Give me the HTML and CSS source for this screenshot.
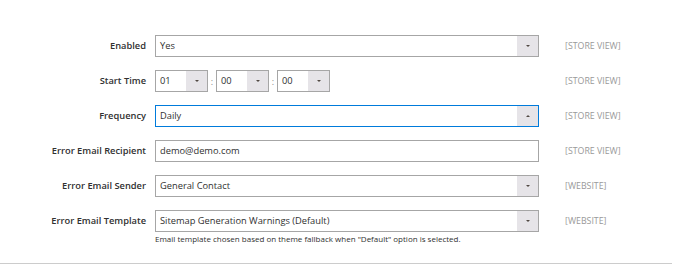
FILE: index.html
```html
<!DOCTYPE html>
<html lang="en">
<head>
    <meta charset="UTF-8">
    <title>Sitemap Generation Settings</title>
    <link rel="stylesheet" href="styles.css">
</head>
<body>
    <div class="config">
        <div class="row">
            <label class="label">Enabled</label>
            <div class="control">
                <div class="select">
                    <span class="value">Yes</span>
                    <span class="action"><span class="arrow"></span></span>
                </div>
            </div>
            <span class="scope">[STORE VIEW]</span>
        </div>

        <div class="row">
            <label class="label">Start Time</label>
            <div class="control time">
                <div class="select small">
                    <span class="value">01</span>
                    <span class="action"><span class="arrow"></span></span>
                </div>
                <span class="colon">:</span>
                <div class="select small">
                    <span class="value">00</span>
                    <span class="action"><span class="arrow"></span></span>
                </div>
                <span class="colon">:</span>
                <div class="select small">
                    <span class="value">00</span>
                    <span class="action"><span class="arrow"></span></span>
                </div>
            </div>
            <span class="scope">[STORE VIEW]</span>
        </div>

        <div class="row">
            <label class="label">Frequency</label>
            <div class="control">
                <div class="select focus">
                    <span class="value">Daily</span>
                    <span class="action"><span class="arrow up"></span></span>
                </div>
            </div>
            <span class="scope">[STORE VIEW]</span>
        </div>

        <div class="row">
            <label class="label">Error Email Recipient</label>
            <div class="control">
                <div class="select">
                    <span class="value">demo@demo.com</span>
                </div>
            </div>
            <span class="scope">[STORE VIEW]</span>
        </div>

        <div class="row">
            <label class="label">Error Email Sender</label>
            <div class="control">
                <div class="select">
                    <span class="value">General Contact</span>
                    <span class="action"><span class="arrow"></span></span>
                </div>
            </div>
            <span class="scope">[WEBSITE]</span>
        </div>

        <div class="row">
            <label class="label">Error Email Template</label>
            <div class="control">
                <div class="select">
                    <span class="value">Sitemap Generation Warnings (Default)</span>
                    <span class="action"><span class="arrow"></span></span>
                </div>
                <p class="note">Email template chosen based on theme fallback when "Default" option is selected.</p>
            </div>
            <span class="scope">[WEBSITE]</span>
        </div>
    </div>
</body>
</html>
```

FILE: styles.css
```css
body {
    margin: 0;
    font-family: 'Open Sans', sans-serif;
    background-color: #ffffff;
    color: #303030;
}

.config {
    width: 672px;
    padding-top: 35px;
    padding-bottom: 19px;
    border-bottom: 1px solid #cccccc;
    display: flex;
    flex-direction: column;
    gap: 13px;
}

.row {
    display: grid;
    grid-template-columns: 146px 384px auto;
    column-gap: 9px;
    align-items: start;
}

.label {
    font-size: 9.3px;
    font-weight: 600;
    color: #303030;
    text-align: right;
    line-height: 22px;
}

.control.time {
    display: flex;
    align-items: center;
}

.select {
    height: 22px;
    box-sizing: border-box;
    border: 1px solid #a6a6a6;
    display: flex;
    align-items: stretch;
    background-color: #ffffff;
}

.select.small {
    width: 53px;
}

.select.focus {
    border-color: #007bdb;
}

.value {
    flex: 1;
    font-size: 9.3px;
    line-height: 20px;
    padding-left: 4px;
    color: #303030;
    white-space: nowrap;
    overflow: hidden;
}

.action {
    width: 21px;
    background-color: #e6e4e8;
    display: flex;
    justify-content: center;
    align-items: center;
}

.arrow {
    width: 0;
    height: 0;
    border-left: 2.5px solid transparent;
    border-right: 2.5px solid transparent;
    border-top: 2.5px solid #514943;
}

.arrow.up {
    border-top: 0;
    border-bottom: 2.5px solid #514943;
}

.colon {
    width: 8px;
    text-align: center;
    font-size: 9px;
    color: #8a8a8a;
}

.note {
    margin: 2px 0 0;
    font-size: 8px;
    line-height: 10px;
    color: #303030;
    white-space: nowrap;
}

.scope {
    font-size: 8.8px;
    line-height: 22px;
    color: #999999;
    padding-left: 17px;
}
```
